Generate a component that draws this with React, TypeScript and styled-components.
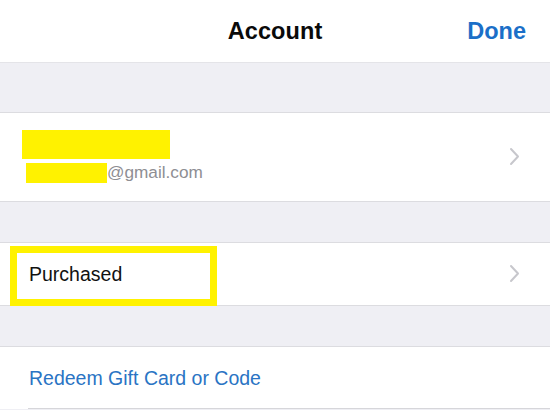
import { Component } from "react";
import styled, { createGlobalStyle } from "styled-components";

const GlobalStyle = createGlobalStyle`
    html, body
    {
        margin: 0;
        padding: 0;
        background: #efeff4;
    }

    body
    {
        font-family: "Liberation Sans", Arial, sans-serif;
        -webkit-font-smoothing: antialiased;
    }
`;

interface IRowProps
{
    height : number
    inset? : boolean
}

class Chevron extends Component
{
    render() : JSX.Element
    {
        return (
            <ChevronSvg width="11" height="19" viewBox="0 0 11 19">
                <path d="M2 2 L9 9.5 L2 17" fill="none" stroke="#c7c7cc" strokeWidth="2" strokeLinecap="round" strokeLinejoin="round"/>
            </ChevronSvg>
        );
    }
}

class App extends Component
{
    render() : JSX.Element
    {
        return (
            <Page>
                <GlobalStyle/>
                <NavBar>
                    <Title>Account</Title>
                    <DoneButton>Done</DoneButton>
                </NavBar>

                <Spacer size={49}/>

                <Group>
                    <Row height={88}>
                        <Stack>
                            <NameRedaction/>
                            <EmailLine>
                                <EmailRedaction/>
                                <span>@gmail.com</span>
                            </EmailLine>
                        </Stack>
                        <Chevron/>
                    </Row>
                </Group>

                <Spacer size={40}/>

                <Group>
                    <Row height={62}>
                        <Label>Purchased</Label>
                        <Chevron/>
                        <Highlight/>
                    </Row>
                </Group>

                <Spacer size={40}/>

                <Group>
                    <Row height={62} inset>
                        <Link>Redeem Gift Card or Code</Link>
                    </Row>
                </Group>
            </Page>
        );
    }
}

const Page = styled.div`
    width: 550px;
    height: 410px;
    overflow: hidden;
    background: #efeff4;
    display: flex;
    flex-direction: column;
`;

const NavBar = styled.header`
    position: relative;
    height: 62px;
    flex-shrink: 0;
    background: #ffffff;
    border-bottom: 1px solid #e4e4e8;
    display: flex;
    align-items: center;
    justify-content: center;
`;

const Title = styled.h1`
    margin: 0;
    font-size: 23.5px;
    font-weight: 700;
    color: #0a0a0a;
    letter-spacing: 0.1px;
`;

const DoneButton = styled.button`
    position: absolute;
    right: 24px;
    top: 50%;
    transform: translateY(-50%);
    border: none;
    background: none;
    padding: 0;
    font-family: inherit;
    font-size: 23.5px;
    font-weight: 700;
    color: #1b6fc8;
`;

const Spacer = styled.div<{ size : number }>`
    height: ${props => props.size}px;
    flex-shrink: 0;
`;

const Group = styled.section`
    flex-shrink: 0;
    background: #ffffff;
    border-top: 1px solid #dcdce0;
    border-bottom: 1px solid #dcdce0;

    &:last-child
    {
        border-bottom: none;
    }
`;

const Row = styled.div<IRowProps>`
    position: relative;
    height: ${props => props.height}px;
    box-sizing: border-box;
    padding: 0 30px 0 29px;
    display: flex;
    align-items: center;
    justify-content: space-between;

    ${props => props.inset && `
        &:after
        {
            content: "";
            position: absolute;
            left: 28px;
            right: 0;
            bottom: 0;
            height: 1px;
            background: #d6d6da;
        }
    `}
`;

const Stack = styled.div`
    display: flex;
    flex-direction: column;
    gap: 3px;
    margin-top: -1px;
`;

const NameRedaction = styled.div`
    width: 148px;
    height: 29px;
    margin-left: -7px;
    background: #fff200;
`;

const EmailLine = styled.div`
    display: flex;
    align-items: center;
    font-size: 17.2px;
    color: #8e8e93;
`;

const EmailRedaction = styled.span`
    display: inline-block;
    width: 81px;
    height: 20px;
    margin-left: -3px;
    background: #fff200;
`;

const Label = styled.span`
    font-size: 19.5px;
    color: #111111;
`;

const Link = styled.span`
    font-size: 19.5px;
    color: #2a74c4;
`;

const ChevronSvg = styled.svg`
    display: block;
    margin-top: -2px;
`;

const Highlight = styled.div`
    position: absolute;
    left: 10px;
    top: 3px;
    width: 207px;
    height: 60px;
    box-sizing: border-box;
    border: 7px solid #fff200;
    pointer-events: none;
`;

export default App;
